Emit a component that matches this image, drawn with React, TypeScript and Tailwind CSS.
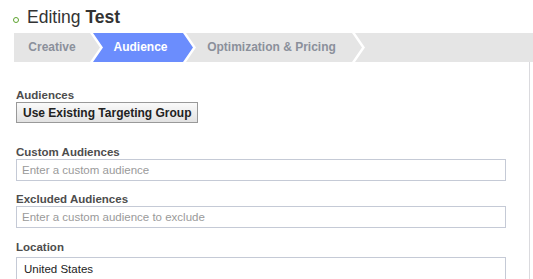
import React from "react";

const font = { fontFamily: '"Liberation Sans", Arial, sans-serif' };

const Field = ({ label, placeholder, className = "" }: { label: string; placeholder: string; className?: string }) => (
    <div className={className}>
        <div className="text-[11.5px] leading-[14px] font-bold text-[#4d4d4d]">{label}</div>
        <input
            type="text"
            placeholder={placeholder}
            className="block w-[490px] h-[22px] border border-[#c5cad6] bg-white pl-[5px] text-[11.5px] text-[#222] outline-none placeholder:text-[#9a9a9a]"
        />
    </div>
);

export default function App() {
    return (
        <div className="w-[533px] h-[279px] overflow-hidden bg-white" style={font}>
            {/* title */}
            <div className="flex items-start pt-[7px] pl-[13px] leading-[21px] text-[17.5px] text-[#333]">
                <span className="mt-[10px] mr-[8px] inline-block w-[6px] h-[6px] rounded-full border-[1.5px] border-[#5ea32f]"></span>
                <span>Editing <b>Test</b></span>
            </div>

            {/* steps */}
            <div className="flex mt-[5px] ml-[14px] h-[29px] text-[12px] font-bold leading-[29px] bg-white">
                <div className="w-[86px] pr-[10px] text-center bg-[#e5e5e5] text-[#8b909b] [clip-path:polygon(0_0,calc(100%_-_10px)_0,100%_50%,calc(100%_-_10px)_100%,0_100%)]">
                    Creative
                </div>
                <div className="-ml-[7px] w-[100px] pl-[5px] pr-[10px] text-center bg-[#6b8dfd] text-white [clip-path:polygon(0_0,calc(100%_-_10px)_0,100%_50%,calc(100%_-_10px)_100%,0_100%,10px_50%)]">
                    Audience
                </div>
                <div className="-ml-[7px] w-[176px] pl-[5px] pr-[10px] text-center bg-[#e5e5e5] text-[#8b909b] [clip-path:polygon(0_0,calc(100%_-_10px)_0,100%_50%,calc(100%_-_10px)_100%,0_100%,10px_50%)]">
                    Optimization &amp; Pricing
                </div>
                <div className="-ml-[7px] flex-1 bg-[#e5e5e5] [clip-path:polygon(0_0,100%_0,100%_100%,0_100%,10px_50%)]"></div>
            </div>

            {/* panel */}
            <div className="ml-[14px] w-[516px] h-[300px] border-r border-[#dadade] pt-[26px] pl-[2px]">
                <div className="text-[11.5px] leading-[14px] font-bold text-[#4d4d4d]">Audiences</div>
                <button className="flex items-center h-[21px] px-[6px] border border-[#999] bg-gradient-to-b from-[#fafafa] to-[#e2e2e2] text-[12px] font-bold text-[#222]">
                    Use Existing Targeting Group
                </button>

                <Field className="mt-[22px]" label="Custom Audiences" placeholder="Enter a custom audience" />
                <Field className="mt-[11px]" label="Excluded Audiences" placeholder="Enter a custom audience to exclude" />

                <div className="mt-[12px]">
                    <div className="text-[11.5px] leading-[14px] font-bold text-[#4d4d4d] mb-[3px]">Location</div>
                    <div className="w-[490px] h-[30px] border border-[#c5cad6] pl-[7px] pt-[4px] text-[11.5px] leading-[14px] text-[#222]">
                        United States
                    </div>
                </div>
            </div>
        </div>
    );
}
